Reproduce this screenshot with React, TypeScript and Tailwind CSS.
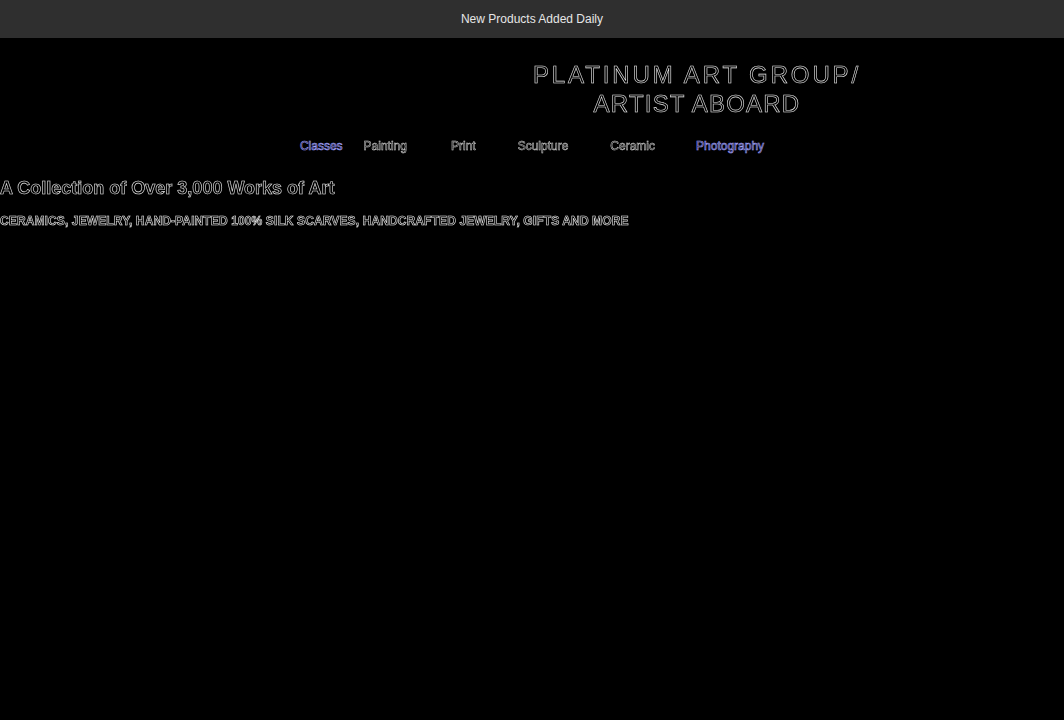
import React from "react";

const NAV = [
  { label: "Classes", accent: true, cls: "ml-0" },
  { label: "Painting", accent: false, cls: "ml-[21px]" },
  { label: "Print", accent: false, cls: "ml-[44px]" },
  { label: "Sculpture", accent: false, cls: "ml-[42px]" },
  { label: "Ceramic", accent: false, cls: "ml-[42px]" },
  { label: "Photography", accent: true, cls: "ml-[41px]" },
];

const outline = "text-transparent [-webkit-text-stroke:0.6px_#e5e5e5]";

export default function App() {
  return (
    <div className="min-h-[720px] bg-black font-['Liberation_Sans',Arial,sans-serif]">
      {/* Announcement bar */}
      <div className="flex h-[38px] items-center justify-center bg-[#2f2f2f] text-[12px] text-[#e6e6e6]">
        New Products Added Daily
      </div>

      {/* Brand */}
      <header className="flex justify-center pl-[330px] pt-[22px]">
        <h1
          className={`text-center text-[24px] leading-[29px] tracking-[0.12em] grayscale ${outline}`}
        >
          PLATINUM ART GROUP/
          <br />
          <span className="tracking-[0.05em]">ARTIST ABOARD</span>
        </h1>
      </header>

      {/* Categories */}
      <nav className="mt-[18px] flex justify-center text-[12px] leading-[20px]">
        {NAV.map((n) => (
          <a
            key={n.label}
            href="#"
            className={`${n.cls} text-transparent ${
              n.accent
                ? "[-webkit-text-stroke:0.6px_#a0a0ff]"
                : "grayscale [-webkit-text-stroke:0.5px_#d6d6d6]"
            }`}
          >
            {n.label}
          </a>
        ))}
      </nav>

      {/* Intro */}
      <section className="mt-[20px] grayscale">
        <h2 className={`text-[18px] leading-[24px] font-bold ${outline}`}>
          A Collection of Over 3,000 Works of Art
        </h2>
        <p
          className={`mt-[14px] text-[12px] leading-[15px] font-bold tracking-[0.01em] ${outline}`}
        >
          CERAMICS, JEWELRY, HAND-PAINTED 100% SILK SCARVES, HANDCRAFTED JEWELRY, GIFTS AND MORE
        </p>
      </section>
    </div>
  );
}
